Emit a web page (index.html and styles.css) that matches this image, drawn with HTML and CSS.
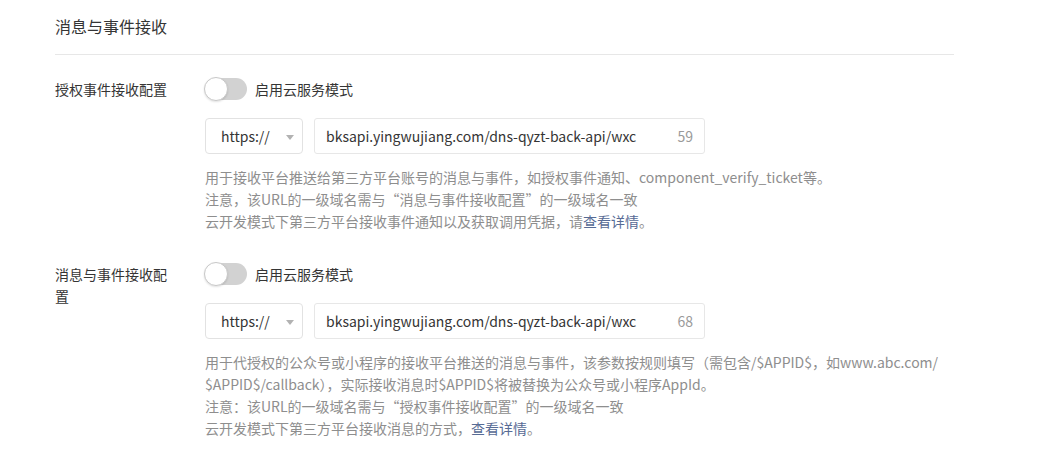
FILE: index.html
```html
<!DOCTYPE html>
<html lang="zh-CN">
<head>
<meta charset="utf-8">
<title>消息与事件接收</title>
<link rel="stylesheet" href="styles.css">
</head>
<body>
<div class="section">
  <div class="title">消息与事件接收</div>

  <div class="row first">
    <div class="label">授权事件接收配置</div>
    <div class="control">
      <div class="switch-line">
        <span class="toggle"><span class="knob"></span></span>
        <span class="switch-text">启用云服务模式</span>
      </div>
      <div class="url-line">
        <div class="select">
          <span>https://</span>
          <span class="arrow"></span>
        </div>
        <div class="input">
          <span class="value">bksapi.yingwujiang.com/dns-qyzt-back-api/wxc</span>
          <span class="count">59</span>
        </div>
      </div>
      <div class="desc">
        <div>用于接收平台推送给第三方平台账号的消息与事件，如授权事件通知、component_verify_ticket等。</div>
        <div>注意，该URL的一级域名需与“消息与事件接收配置”的一级域名一致</div>
        <div>云开发模式下第三方平台接收事件通知以及获取调用凭据，请<a class="link" href="#">查看详情</a>。</div>
      </div>
    </div>
  </div>

  <div class="row second">
    <div class="label">消息与事件接收配置</div>
    <div class="control">
      <div class="switch-line">
        <span class="toggle"><span class="knob"></span></span>
        <span class="switch-text">启用云服务模式</span>
      </div>
      <div class="url-line">
        <div class="select">
          <span>https://</span>
          <span class="arrow"></span>
        </div>
        <div class="input">
          <span class="value">bksapi.yingwujiang.com/dns-qyzt-back-api/wxc</span>
          <span class="count">68</span>
        </div>
      </div>
      <div class="desc">
        <div>用于代授权的公众号或小程序的接收平台推送的消息与事件，该参数按规则填写（需包含/$APPID$，如www.abc.com/</div>
        <div>$APPID$/callback），实际接收消息时$APPID$将被替换为公众号或小程序AppId。</div>
        <div>注意：该URL的一级域名需与“授权事件接收配置”的一级域名一致</div>
        <div>云开发模式下第三方平台接收消息的方式，<a class="link" href="#">查看详情</a>。</div>
      </div>
    </div>
  </div>
</div>
</body>
</html>
```

FILE: styles.css
```css
html, body {
  margin: 0;
  padding: 0;
  background: #ffffff;
}

body {
  font-family: "Noto Sans CJK SC", "Microsoft YaHei", "Noto Sans", sans-serif;
  color: #353535;
  font-size: 14px;
}

.section {
  width: 899px;
  margin-left: 55px;
}

.title {
  font-size: 16px;
  line-height: 24px;
  padding-top: 14px;
  padding-bottom: 16px;
  border-bottom: 1px solid #e7e7e7;
  color: #353535;
}

.row {
  display: flex;
  align-items: flex-start;
}

.row.first {
  margin-top: 23px;
}

.row.second {
  margin-top: 31px;
}

.label {
  width: 120px;
  margin-right: 30px;
  line-height: 22px;
  font-size: 14px;
  color: #353535;
  flex: none;
}

.control {
  display: flex;
  flex-direction: column;
}

.switch-line {
  display: flex;
  align-items: center;
  height: 22px;
}

.toggle {
  position: relative;
  display: inline-block;
  width: 42px;
  height: 22px;
  border-radius: 11px;
  background: #d2d2d2;
  flex: none;
}

.knob {
  position: absolute;
  left: -1px;
  top: -1px;
  width: 22px;
  height: 22px;
  border-radius: 50%;
  background: #ffffff;
  border: 1px solid #c8c8c8;
  box-shadow: 0 1px 2px rgba(0, 0, 0, 0.12);
}

.switch-text {
  margin-left: 8px;
  line-height: 22px;
  color: #353535;
}

.url-line {
  display: flex;
  gap: 11px;
  margin-top: 18px;
}

.select {
  box-sizing: border-box;
  width: 98px;
  height: 36px;
  border: 1px solid #e2e2e2;
  border-radius: 4px;
  padding: 0 8px 0 15px;
  display: flex;
  align-items: center;
  justify-content: space-between;
  color: #353535;
}

.arrow {
  width: 0;
  height: 0;
  border-left: 4px solid transparent;
  border-right: 4px solid transparent;
  border-top: 5px solid #b2b2b2;
  margin-top: 2px;
}

.input {
  box-sizing: border-box;
  width: 391px;
  height: 36px;
  border: 1px solid #e7e7e7;
  border-radius: 3px;
  padding: 0 11px;
  display: flex;
  align-items: center;
  justify-content: space-between;
}

.value {
  width: 314px;
  overflow: hidden;
  white-space: nowrap;
  color: #353535;
}

.count {
  color: #9a9a9a;
}

.desc {
  margin-top: 12px;
  line-height: 22px;
  font-size: 14px;
  color: #8e8e8e;
  white-space: nowrap;
}

.link {
  color: #576b95;
  text-decoration: none;
}
```
